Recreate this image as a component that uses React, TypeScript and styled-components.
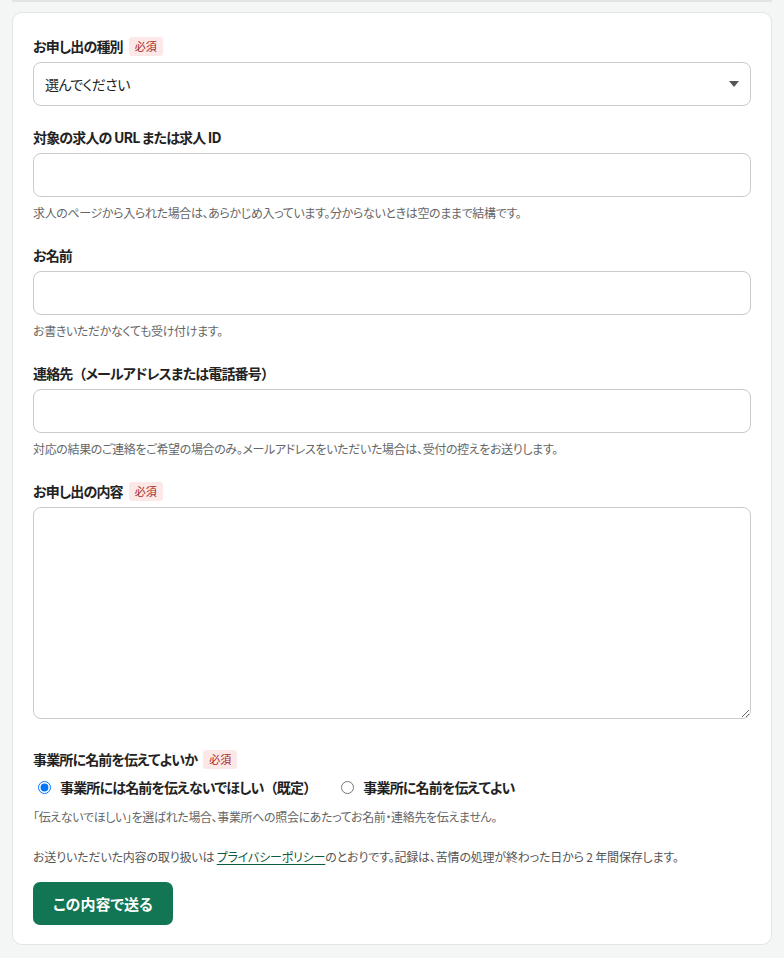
import React from "react";
import styled, { createGlobalStyle } from "styled-components";

const GlobalStyle = createGlobalStyle`
  html, body {
    margin: 0;
    padding: 0;
    background: #f4f6f5;
  }
  body {
    font-family: "Noto Sans CJK JP", "Noto Sans", sans-serif;
    color: #222;
    font-feature-settings: "palt";
  }
  * { box-sizing: border-box; }
`;

const Page = styled.div`
  padding: 0 12px 12px;
`;

const TopEdge = styled.div`
  height: 2px;
  background: #e2e4e3;
  margin-bottom: 10px;
`;

const Card = styled.form`
  background: #fff;
  border: 1px solid #e3e5e4;
  border-radius: 10px;
  padding: 23px 20px 19px;
`;

const Field = styled.div<{ $gap?: number }>`
  margin-bottom: ${(p) => p.$gap ?? 23}px;
`;

const Label = styled.div`
  display: flex;
  align-items: center;
  gap: 6px;
  font-size: 14px;
  line-height: 20px;
  font-weight: 700;
  letter-spacing: -0.06em;
  color: #222;
  margin-bottom: 6px;
`;

// full-width brackets keep their natural width, as in the original
const Paren = styled.span`
  font-feature-settings: normal;
`;

const Badge = styled.span`
  display: inline-flex;
  align-items: center;
  height: 19px;
  padding: 0 6px;
  border-radius: 3px;
  background: #fde8e8;
  color: #a3262a;
  font-size: 11px;
  font-weight: 400;
  letter-spacing: 0;
`;

const SelectWrap = styled.div`
  position: relative;
`;

const Select = styled.select`
  display: block;
  width: 100%;
  height: 44px;
  appearance: none;
  border: 1px solid #c9cccb;
  border-radius: 8px;
  background: #fff;
  padding: 0 36px 0 11px;
  font-family: inherit;
  font-feature-settings: "palt";
  font-size: 14px;
  letter-spacing: -0.04em;
  color: #222;
`;

const Caret = styled.svg`
  position: absolute;
  right: 12px;
  top: 50%;
  margin-top: -3px;
  pointer-events: none;
`;

const Input = styled.input`
  display: block;
  width: 100%;
  height: 44px;
  border: 1px solid #c9cccb;
  border-radius: 8px;
  background: #fff;
  padding: 0 11px;
  font-family: inherit;
  font-size: 15px;
`;

const TextArea = styled.textarea`
  display: block;
  width: 100%;
  height: 212px;
  border: 1px solid #c9cccb;
  border-radius: 8px;
  background: #fff;
  padding: 10px 11px;
  font-family: inherit;
  font-size: 15px;
`;

const Help = styled.p<{ $top?: number }>`
  margin: ${(p) => p.$top ?? 7}px 0 0;
  font-size: 12px;
  line-height: 18px;
  letter-spacing: -0.03em;
  color: #666;
`;

const RadioRow = styled.div`
  display: flex;
  align-items: center;
  gap: 20px;
  height: 20px;
  margin-top: 8px;
`;

const RadioLabel = styled.label`
  display: inline-flex;
  align-items: center;
  font-size: 14px;
  font-weight: 700;
  letter-spacing: -0.06em;
  color: #222;

  input {
    margin: 0 9px 0 5px;
    width: 13px;
    height: 13px;
  }
`;

const Note = styled.p`
  margin: 0 0 16px;
  font-size: 12px;
  line-height: 18px;
  letter-spacing: -0.015em;
  color: #555;
`;

const Link = styled.a`
  color: #0d5a3e;
  text-decoration: underline;
  text-underline-offset: 2px;
`;

const SubmitButton = styled.button`
  height: 43px;
  padding: 0 20px;
  border: none;
  border-radius: 7px;
  background: #127553;
  color: #fff;
  font-family: inherit;
  font-feature-settings: "palt";
  font-size: 15px;
  font-weight: 700;
  cursor: pointer;
`;

export default function App() {
  return (
    <Page>
      <GlobalStyle />
      <TopEdge />
      <Card onSubmit={(e) => e.preventDefault()}>
        <Field $gap={21}>
          <Label>
            お申し出の種別<Badge>必須</Badge>
          </Label>
          <SelectWrap>
            <Select defaultValue="">
              <option value="">選んでください</option>
            </Select>
            <Caret width="10" height="6" viewBox="0 0 10 6">
              <path d="M0 0h10L5 6z" fill="#555" />
            </Caret>
          </SelectWrap>
        </Field>

        <Field>
          <Label>対象の求人の URL または求人 ID</Label>
          <Input type="text" />
          <Help>
            求人のページから入られた場合は、あらかじめ入っています。分からないときは空のままで結構です。
          </Help>
        </Field>

        <Field>
          <Label>お名前</Label>
          <Input type="text" />
          <Help>お書きいただかなくても受け付けます。</Help>
        </Field>

        <Field>
          <Label>
            <span>
              連絡先<Paren>（</Paren>メールアドレスまたは電話番号<Paren>）</Paren>
            </span>
          </Label>
          <Input type="text" />
          <Help>
            対応の結果のご連絡をご希望の場合のみ。メールアドレスをいただいた場合は、受付の控えをお送りします。
          </Help>
        </Field>

        <Field $gap={30}>
          <Label>
            お申し出の内容<Badge>必須</Badge>
          </Label>
          <TextArea />
        </Field>

        <Field $gap={22}>
          <Label>
            事業所に名前を伝えてよいか<Badge>必須</Badge>
          </Label>
          <RadioRow>
            <RadioLabel>
              <input type="radio" name="disclose" defaultChecked />
              事業所には名前を伝えないでほしい<Paren>（</Paren>既定<Paren>）</Paren>
            </RadioLabel>
            <RadioLabel>
              <input type="radio" name="disclose" />
              事業所に名前を伝えてよい
            </RadioLabel>
          </RadioRow>
          <Help $top={11}>
            「伝えないでほしい」を選ばれた場合、事業所への照会にあたってお名前・連絡先を伝えません。
          </Help>
        </Field>

        <Note>
          お送りいただいた内容の取り扱いは <Link href="#">プライバシーポリシー</Link>
          のとおりです。記録は、苦情の処理が終わった日から 2 年間保存します。
        </Note>

        <SubmitButton type="submit">この内容で送る</SubmitButton>
      </Card>
    </Page>
  );
}
